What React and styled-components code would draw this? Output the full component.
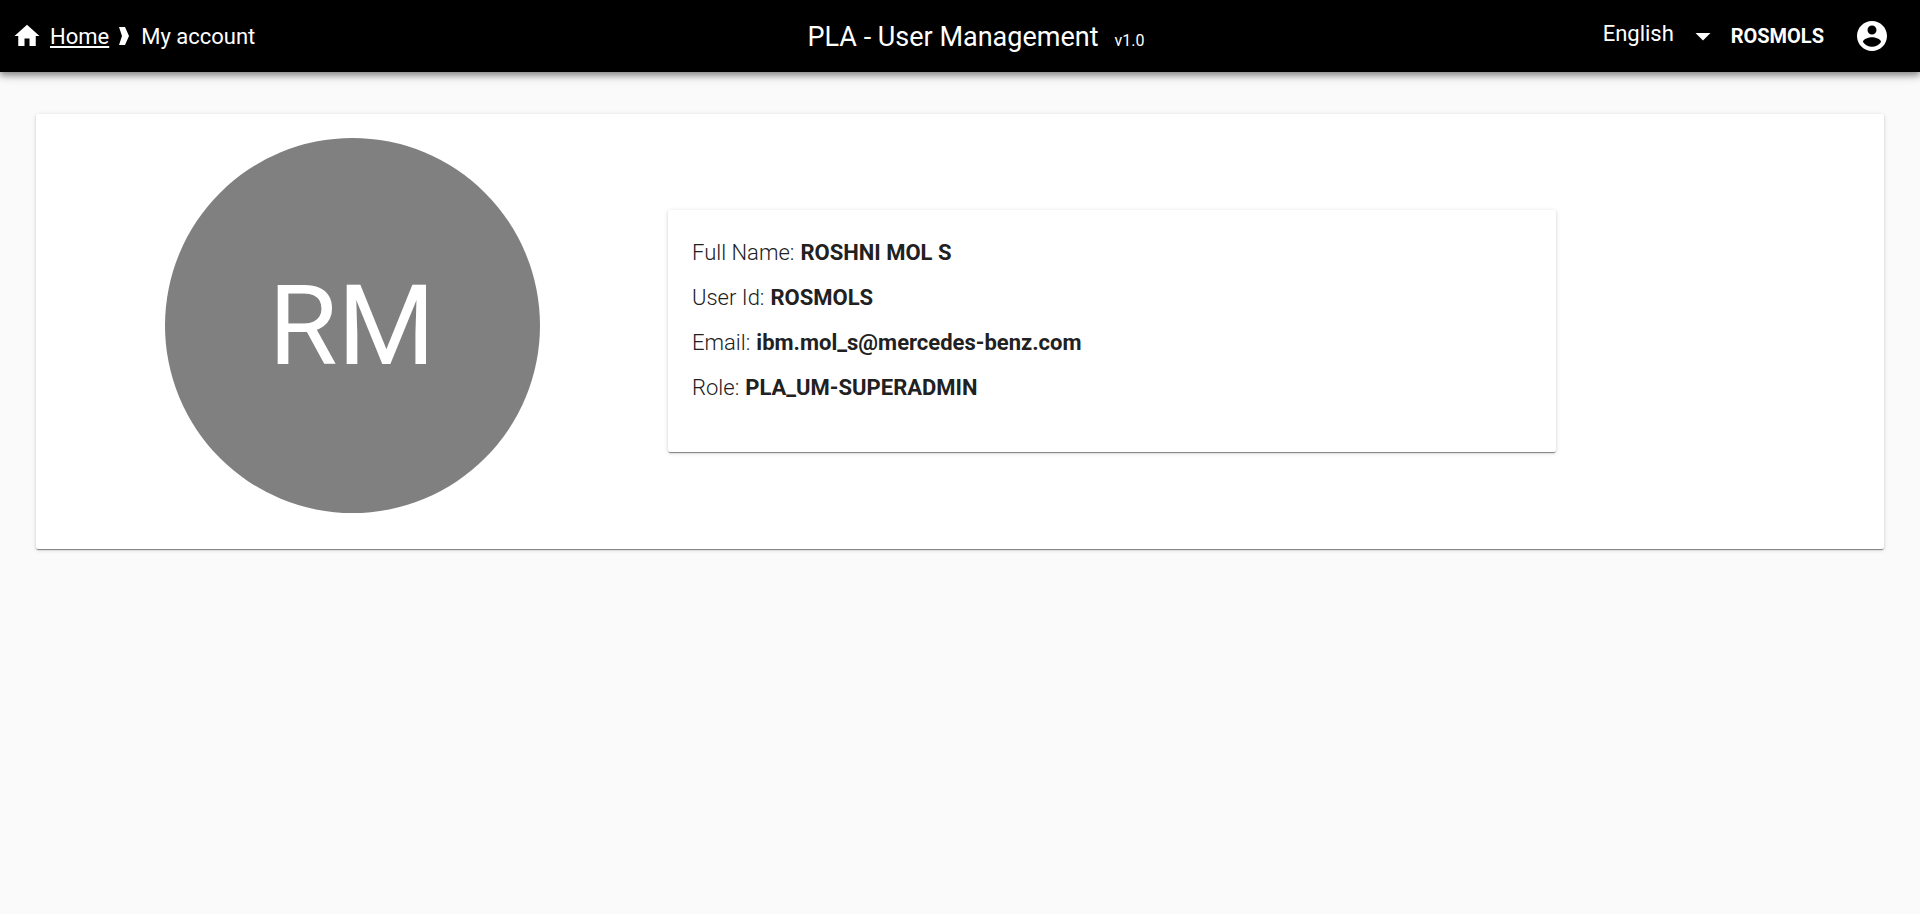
import React from "react";
import styled, { createGlobalStyle } from "styled-components";

const GlobalStyle = createGlobalStyle`
  *, *::before, *::after { box-sizing: border-box; }
  body {
    margin: 0;
    background: #fafafa;
    color: #212121;
    font-family: Roboto, "Liberation Sans", sans-serif;
  }
`;

const TopBar = styled.header`
  display: grid;
  grid-template-columns: 1fr auto 1fr;
  align-items: center;
  height: 72px;
  padding: 0 30px 0 12px;
  background: #000;
  color: #fff;
  box-shadow: 0 3px 6px rgba(0, 0, 0, 0.3), 0 4px 8px rgba(0, 0, 0, 0.16),
    0 1px 14px rgba(0, 0, 0, 0.12);
`;

const Breadcrumbs = styled.nav`
  display: flex;
  align-items: center;
  font-size: 22px;
  line-height: 32px;
`;

const HomeLink = styled.a`
  margin-left: 8px;
  padding-top: 2px;
  color: inherit;
  text-decoration: underline;
  text-decoration-thickness: 2px;
  text-underline-offset: 2px;
  text-decoration-skip-ink: none;
`;

const CurrentPage = styled.span`
  padding-top: 2px;
`;

const Icon = styled.svg`
  display: block;
  flex: none;
  width: ${(p) => p.$size}px;
  height: ${(p) => p.$size}px;
  fill: currentColor;
`;

const Separator = styled.svg`
  width: 10px;
  height: 18px;
  margin: 0 12px 0 10px;
  fill: currentColor;
`;

const Title = styled.h1`
  display: flex;
  align-items: baseline;
  gap: 16px;
  margin: 0;
  padding: 6px 0 0 50px;
  font-size: 27px;
  font-weight: 400;
  line-height: 36px;
`;

const Version = styled.small`
  font-size: 16px;
`;

const Tools = styled.div`
  display: flex;
  align-items: center;
  justify-content: flex-end;
`;

const LanguagePicker = styled.label`
  display: grid;
  align-items: center;
  margin-right: 10px;

  > * { grid-area: 1 / 1; }
  > svg { justify-self: end; pointer-events: none; }
`;

const LanguageSelect = styled.select`
  appearance: none;
  width: 118px;
  padding: 0 0 4px;
  border: 0;
  background: transparent;
  color: inherit;
  font: inherit;
  font-size: 22px;
  line-height: 32px;
`;

const UserName = styled.span`
  margin-right: 30px;
  font-size: 20px;
  font-weight: 700;
`;

const AccountButton = styled.button`
  padding: 0;
  border: 0;
  background: none;
  color: inherit;
  cursor: pointer;
`;

const Card = styled.section`
  background: #fff;
  border-radius: 2px;
  box-shadow: 0 2px 1px -1px rgba(0, 0, 0, 0.3), 0 1px 1px rgba(0, 0, 0, 0.2),
    0 1px 4px rgba(0, 0, 0, 0.16);
`;

const ProfileCard = styled(Card)`
  display: grid;
  grid-template-columns: repeat(12, minmax(0, 1fr));
  column-gap: 24px;
  align-items: center;
  margin: 42px 36px;
  padding: 24px 24px 36px;
`;

const Avatar = styled.div`
  grid-column: span 4;
  justify-self: center;
  display: grid;
  place-items: center;
  width: 375px;
  height: 375px;
  border-radius: 50%;
  background: #808080;
  color: #fff;
  font-size: 112px;
`;

const DetailsCard = styled(Card)`
  grid-column: span 6;
  margin-top: 10px;
  padding: 20px 24px 42px;
`;

const Details = styled.dl`
  margin: 0;
`;

const Detail = styled.div`
  display: flex;
  gap: 6px;
  font-size: 22px;
  line-height: 45px;
`;

const Term = styled.dt`
  font-weight: 300;
`;

const Value = styled.dd`
  margin: 0;
  font-weight: 700;
`;

const details = [
  ["Full Name:", "ROSHNI MOL S"],
  ["User Id:", "ROSMOLS"],
  ["Email:", "ibm.mol_s@mercedes-benz.com"],
  ["Role:", "PLA_UM-SUPERADMIN"],
];

export default function App() {
  return (
    <>
      <GlobalStyle />
      <TopBar>
        <Breadcrumbs aria-label="Breadcrumb">
          <Icon $size={30} viewBox="0 0 24 24" aria-hidden="true">
            <path d="M10 20v-6h4v6h5v-8h3L12 3 2 12h3v8z" />
          </Icon>
          <HomeLink href="#home">Home</HomeLink>
          <Separator viewBox="0 0 10 18" aria-hidden="true">
            <path d="M0 0h6l4 9-4 9H0l3-9z" />
          </Separator>
          <CurrentPage aria-current="page">My account</CurrentPage>
        </Breadcrumbs>
        <Title>
          PLA - User Management <Version>v1.0</Version>
        </Title>
        <Tools>
          <LanguagePicker>
            <LanguageSelect aria-label="Language" defaultValue="en">
              <option value="en">English</option>
            </LanguageSelect>
            <Icon $size={36} viewBox="0 0 24 24" aria-hidden="true">
              <path d="M7 10l5 5 5-5z" />
            </Icon>
          </LanguagePicker>
          <UserName>ROSMOLS</UserName>
          <AccountButton type="button" aria-label="Account">
            <Icon $size={36} viewBox="0 0 24 24" aria-hidden="true">
              <path d="M12 2C6.48 2 2 6.48 2 12s4.480 10 10 10 10-4.480 10-10S17.520 2 12 2zm0 3c1.660 0 3 1.340 3 3s-1.340 3-3 3-3-1.340-3-3 1.340-3 3-3zm0 14.200c-2.500 0-4.710-1.280-6-3.220.030-1.990 4-3.080 6-3.080 1.990 0 5.970 1.090 6 3.080-1.290 1.940-3.500 3.220-6 3.220z" />
            </Icon>
          </AccountButton>
        </Tools>
      </TopBar>
      <main>
        <ProfileCard>
          <Avatar>RM</Avatar>
          <DetailsCard>
            <Details>
              {details.map(([term, value]) => (
                <Detail key={term}>
                  <Term>{term}</Term>
                  <Value>{value}</Value>
                </Detail>
              ))}
            </Details>
          </DetailsCard>
        </ProfileCard>
      </main>
    </>
  );
}
